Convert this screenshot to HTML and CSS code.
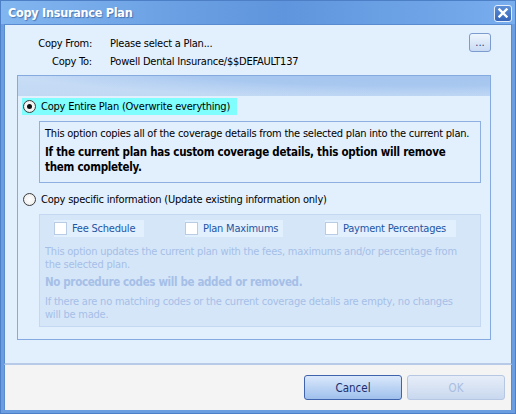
FILE: index.html
```html
<!DOCTYPE html>
<html>
<head>
<meta charset="utf-8">
<link rel="stylesheet" href="styles.css">
</head>
<body>
<div class="window">
  <div class="titlebar">
    <span class="title">Copy Insurance Plan</span>
    <span class="close">
      <svg width="10" height="10" viewBox="0 0 10 10"><path d="M1.5 1.5 L8.5 8.5 M8.5 1.5 L1.5 8.5" stroke="#fff" stroke-width="2.4" stroke-linecap="square"/></svg>
    </span>
  </div>
  <div class="content">
    <div class="header">
      <div class="fields">
        <span class="lbl">Copy From:</span><span class="val">Please select a Plan...</span>
        <span class="lbl">Copy To:</span><span class="val">Powell Dental Insurance/$$DEFAULT137</span>
      </div>
      <button class="browse">...</button>
    </div>
    <div class="panel">
      <div class="panel-head"></div>
      <div class="option first">
        <span class="radio checked"></span><span class="opt-text">Copy Entire Plan (Overwrite everything)</span>
      </div>
      <div class="box">
        <p class="line">This option copies all of the coverage details from the selected plan into the current plan.</p>
        <p class="line bold">If the current plan has custom coverage details, this option will remove them completely.</p>
      </div>
      <div class="option second">
        <span class="radio"></span><span class="opt-text">Copy specific information (Update existing information only)</span>
      </div>
      <div class="box disabled">
        <div class="checks">
          <span class="check c1"><span class="cb"></span>Fee Schedule</span>
          <span class="check c2"><span class="cb"></span>Plan Maximums</span>
          <span class="check c3"><span class="cb"></span>Payment Percentages</span>
        </div>
        <p class="dline first">This option updates the current plan with the fees, maximums and/or percentage from the selected plan.</p>
        <p class="dline bold">No procedure codes will be added or removed.</p>
        <p class="dline last">If there are no matching codes or the current coverage details are empty, no changes will be made.</p>
      </div>
    </div>
  </div>
  <div class="footer">
    <button class="btn cancel">Cancel</button>
    <button class="btn ok">OK</button>
  </div>
</div>
</body>
</html>
```

FILE: styles.css
```css
* { box-sizing: border-box; }
html, body { margin: 0; padding: 0; }
body {
  width: 516px; height: 414px; overflow: hidden;
  font-family: "DejaVu Sans Condensed", "DejaVu Sans", sans-serif;
  font-stretch: semi-condensed;
  font-size: 11px;
  letter-spacing: -0.22px;
  color: #000;
}
.window {
  width: 516px; height: 414px;
  display: flex; flex-direction: column;
  background: #6b9ee0;
  border: 1px solid #4d7fc6;
  padding: 0 3px 3px 3px;
}
.titlebar {
  height: 23px; flex: none;
  display: flex; align-items: center; justify-content: space-between;
  background: linear-gradient(to right, #82b6f0 0%, #6a9fe3 35%, #5f95dc 55%, #78aeee 100%);
  margin: 0 -3px;
  padding: 0 3px 0 7px;
}
.title {
  color: #fff;
  font-weight: bold; font-size: 12.5px;
  letter-spacing: -0.25px;
  text-shadow: 1px 1px 1px rgba(30,60,120,0.5);
}
.close {
  width: 18px; height: 17px; margin-top: 1px;
  border-radius: 3px;
  background: linear-gradient(#5d8fd8, #3564b8);
  border: 1px solid #e4eefb;
  display: flex; align-items: center; justify-content: center;
}
.content {
  flex: 1;
  background: #e2effd;
  border: 1px solid #5a8ad0;
  border-bottom: 2px solid #b7cbe8;
  display: flex; flex-direction: column;
}
.header {
  display: flex; align-items: flex-start;
  padding: 9px 20px 0 0;
}
.fields {
  flex: 1;
  display: grid;
  grid-template-columns: 87px auto;
  column-gap: 18px;
  grid-auto-rows: 18px;
  align-items: center;
}
.lbl { text-align: right; }
.browse {
  width: 22px; height: 19px; margin-top: -1px;
  border: 1px solid #7c9ccf; border-radius: 3px;
  background: linear-gradient(#eef5fd, #c9dbf4);
  font: inherit; font-size: 11px; color: #1b3a7a;
  padding: 0; line-height: 14px;
}
.panel {
  margin: 5px 20px 0 12px;
  height: 265px;
  border: 1px solid #84aadf;
  display: flex; flex-direction: column;
}
.panel-head {
  height: 20px; flex: none;
  background:
    radial-gradient(ellipse 420px 30px at 85% -8px, #a3c3ee 0%, #a9c8f0 60%, rgba(197,219,245,0) 100%),
    linear-gradient(#c8ddf6, #c2d9f4);
}
.option {
  display: flex; align-items: center;
  align-self: flex-start;
  height: 17px;
  margin-left: 4px;
  padding-right: 7px;
  white-space: nowrap;
}
.option.first { margin-top: 2px; background: #80fdfd; }
.option.second { margin-top: 8px; }
.opt-text { line-height: 17px; }
.radio {
  width: 13px; height: 13px; flex: none;
  border-radius: 50%;
  border: 1px solid #3c3c3c;
  background: radial-gradient(circle, #fff 0%, #f2f2f2 60%, #d8d8d8 100%);
  margin-right: 5px; margin-left: 1px;
  position: relative;
}
.radio.checked::after {
  content: ""; position: absolute; left: 3px; top: 3px;
  width: 5px; height: 5px; border-radius: 50%; background: #111;
}
.box {
  margin: 6px 9px 0 21px;
  border: 1px solid #8eb0e0;
  padding: 5px 5px 7px 5px;
}
.box .line { margin: 0; line-height: 14px; }
.box .line.bold { font-weight: bold; font-size: 11.5px; letter-spacing: -0.26px; line-height: 15px; margin-top: 4px; }
.box.disabled {
  margin-top: 6px;
  background: #d6e6f9;
  border-color: #c4d8f1;
  padding: 5px 22px 5px 5px;
  color: #a5bfe7;
}
.checks { display: flex; height: 17px; margin-left: 9px; }
.check {
  display: flex; align-items: center;
  background: #e2effd; color: #1e56a4;
  height: 17px; white-space: nowrap;
  flex: none;
}
.c1 { width: 90px; }
.c2 { width: 98px; margin-left: 41px; }
.c3 { width: 131px; margin-left: 42px; }
.cb {
  width: 13px; height: 13px; background: #fff;
  border: 1px solid #b9cce6; margin-right: 5px;
}
.dline { margin: 0; line-height: 13px; }
.dline.first { margin-top: 8px; }
.dline.bold { font-weight: bold; font-size: 11.5px; letter-spacing: -0.35px; margin-top: 5px; }
.dline.last { margin-top: 6px; }
.footer {
  height: 45px; flex: none;
  background: #f4f4f4;
  display: flex; align-items: center; justify-content: flex-end;
  padding: 0 6px 0 0;
  gap: 5px;
  border-left: 1px solid #5a8ad0; border-right: 1px solid #5a8ad0;
}
.btn {
  width: 98px; height: 25px;
  font: inherit; font-size: 11.5px;
  border-radius: 3px;
}
.cancel {
  border: 1px solid #3f64ad;
  background: linear-gradient(#dbe8fb, #bcd4f4 50%, #9fc0ec);
  color: #1c2d6c;
}
.ok {
  border: 1px solid #b6c7e3;
  background: linear-gradient(#e6edf8, #c9d8ef);
  color: #a9bde0;
}
```
